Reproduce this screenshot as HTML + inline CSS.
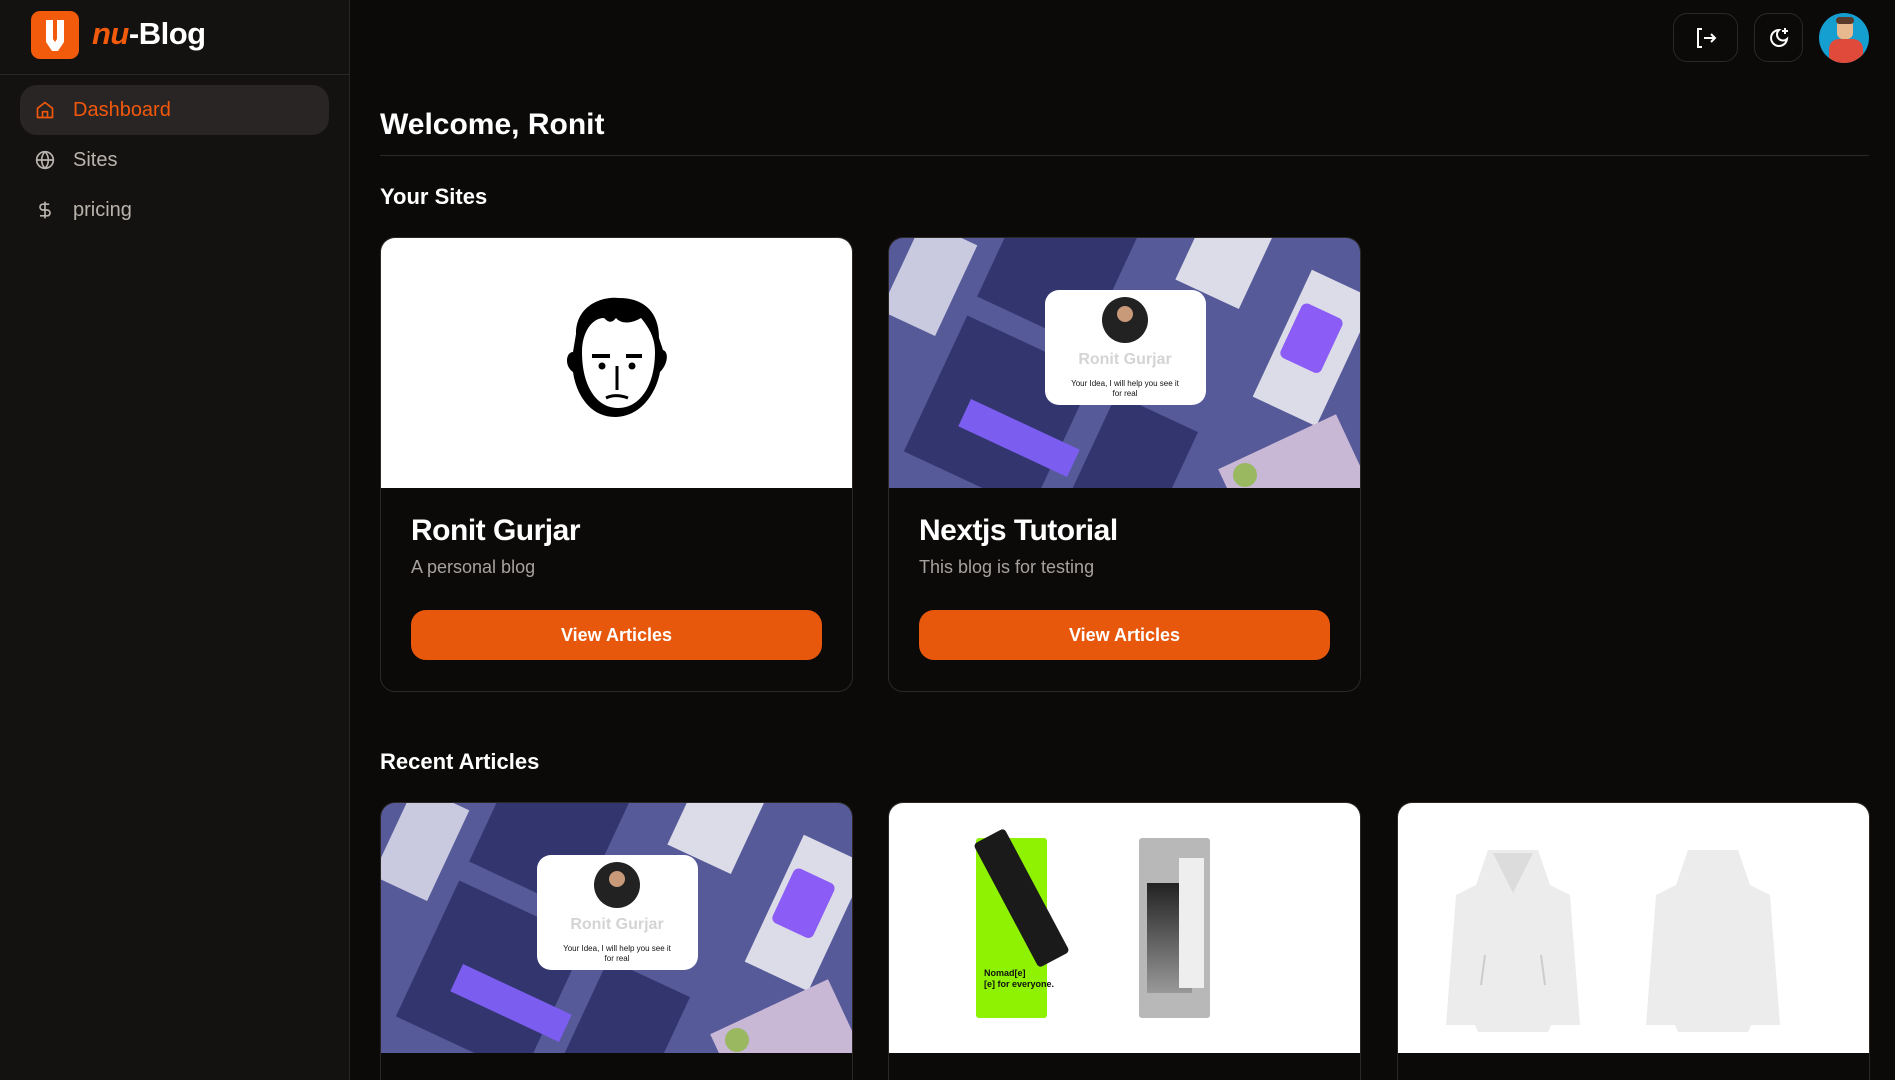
<!DOCTYPE html>
<html style="overflow:hidden;width:1895px;height:1080px"><head><meta charset="utf-8"><style>
*{margin:0;padding:0;box-sizing:border-box}
body{width:1895px;height:1080px;overflow:hidden;background:#0b0a09;font-family:"Liberation Sans",sans-serif;color:#fff;position:relative}
.side{position:absolute;left:0;top:0;width:350px;height:1080px;background:#141211;border-right:1px solid #262321}
.logo{position:absolute;left:31px;top:11px;width:48px;height:48px;background:#f25a0c;border-radius:9px}
.brand{position:absolute;left:92px;top:16px;font-size:31px;font-weight:bold;letter-spacing:-0.5px}
.brand i{color:#f25a0c}
.sep{position:absolute;left:0;top:74px;width:350px;height:1px;background:#2a2725}
.nav{position:absolute;left:20px;width:309px;height:50px;border-radius:17px;font-size:20px;display:flex;align-items:center;padding-left:15px;color:#b9b3ad}
.nav svg{margin-right:18px}
.act{background:#292524;color:#f2580c}
.btn{position:absolute;top:13px;height:49px;border:1px solid #2b2826;border-radius:14px;display:flex;align-items:center;justify-content:center}
h1{position:absolute;left:380px;top:108px;font-size:30px;font-weight:bold}
.hr{position:absolute;left:380px;top:155px;width:1489px;height:1px;background:#2b2826}
h2{position:absolute;left:380px;font-size:22px;font-weight:bold}
.card{position:absolute;width:473px;border:1px solid #2b2826;border-radius:15px;overflow:hidden;background:#0b0a09}
.img{height:250px;position:relative;overflow:hidden}
.ct{position:absolute;left:30px;top:276px;font-size:30px;font-weight:bold;letter-spacing:-0.5px}
.cs{position:absolute;left:30px;top:319px;font-size:18px;color:#a8a29e}
.vb{position:absolute;left:30px;top:372px;width:411px;height:50px;background:#e8580c;border-radius:15px;font-size:18px;font-weight:bold;display:flex;align-items:center;justify-content:center}
.hd{position:absolute;top:42px;width:140px;height:190px}
</style></head><body>
<div class="side">
<div class="logo"><svg width="48" height="48" viewBox="0 0 48 48"><path d="M15 9h7v19l2 3 2-3V9h7v22l-6 9h-6l-6-9z" fill="#fff"/></svg></div>
<div class="brand"><i>nu</i>-Blog</div>
<div class="sep"></div>
<div class="nav act" style="top:85px"><svg width="20" height="20" viewBox="0 0 24 24" fill="none" stroke="#f2580c" stroke-width="2" stroke-linejoin="round"><path d="M3 10l9-7 9 7v11H3z"/><path d="M9 21v-7h6v7"/></svg>Dashboard</div>
<div class="nav" style="top:135px"><svg width="20" height="20" viewBox="0 0 24 24" fill="none" stroke="#b9b3ad" stroke-width="2"><circle cx="12" cy="12" r="10"/><path d="M2 12h20M12 2c3 3 4 7 4 10s-1 7-4 10c-3-3-4-7-4-10s1-7 4-10"/></svg>Sites</div>
<div class="nav" style="top:185px"><svg width="20" height="20" viewBox="0 0 24 24" fill="none" stroke="#b9b3ad" stroke-width="2"><path d="M12 2v20M17 5H9.5a3.5 3.5 0 000 7h5a3.5 3.5 0 010 7H6"/></svg>pricing</div>
</div>
<div class="btn" style="left:1673px;width:65px"><svg width="24" height="24" viewBox="0 0 24 24" fill="none" stroke="#fff" stroke-width="2"><path d="M8 3H4v18h4M10 12h11M17 8l4 4-4 4"/></svg></div>
<div class="btn" style="left:1754px;width:49px"><svg width="24" height="24" viewBox="0 0 24 24" fill="none" stroke="#fff" stroke-width="2"><path d="M12 4a8 8 0 108 9 6 6 0 01-8-9z"/><path d="M18 2v6M15 5h6"/></svg></div>
<div style="position:absolute;left:1819px;top:13px;width:50px;height:50px;border-radius:50%;background:#159ed0;overflow:hidden"><div style="position:absolute;left:18px;top:6px;width:16px;height:20px;background:#e8b98f;border-radius:6px"></div><div style="position:absolute;left:17px;top:4px;width:18px;height:7px;background:#5a3a2a;border-radius:4px"></div><div style="position:absolute;left:10px;top:26px;width:34px;height:30px;background:#e04a3a;border-radius:10px"></div></div>
<h1>Welcome, Ronit</h1>
<div class="hr"></div>
<h2 style="top:184px">Your Sites</h2>
<div class="card" style="left:380px;top:237px;height:455px">
<div class="img" style="background:#fff"><svg style="position:absolute;left:183px;top:56px" width="107" height="135" viewBox="0 0 107 135"><path d="M12 40C12 10 40 2 55 4c25 0 40 14 40 40l4 12c6 2 5 14 -3 22-4 22-20 45-45 45S12 100 9 78C0 72 2 58 9 58z" fill="#000"/><path d="M18 58c0-20 10-34 22-34 5 5 8 5 12 0 5 6 15 6 25 0 10 12 14 22 14 34 0 35-16 56-37 56S18 93 18 58z" fill="#fff"/><path d="M28 62h18M62 62h16" stroke="#000" stroke-width="4"/><circle cx="38" cy="72" r="3.5"/><circle cx="68" cy="72" r="3.5"/><path d="M53 72v24M42 104c6-3 14-3 22 0" stroke="#000" stroke-width="3" fill="none"/></svg></div>
<div class="ct">Ronit Gurjar</div><div class="cs">A personal blog</div><div class="vb">View Articles</div></div>
<div class="card" style="left:888px;top:237px;height:455px">
<div class="img" id="p1"></div>
<div class="ct">Nextjs Tutorial</div><div class="cs">This blog is for testing</div><div class="vb">View Articles</div></div>
<h2 style="top:749px">Recent Articles</h2>
<div class="card" style="left:380px;top:802px;height:278px;border-bottom:none;border-radius:15px 15px 0 0"><div class="img" id="p2"></div></div>
<div class="card" style="left:888px;top:802px;height:278px;border-bottom:none;border-radius:15px 15px 0 0"><div class="img" style="background:#fff">
<div style="position:absolute;left:87px;top:35px;width:71px;height:180px;background:#8ef202;border-radius:3px"></div>
<div style="position:absolute;left:115px;top:25px;width:35px;height:140px;background:#1a1a1a;transform:rotate(-28deg);border-radius:4px"></div>
<div style="position:absolute;left:95px;top:165px;font-size:9px;color:#111;font-weight:bold;line-height:11px">Nomad[e]<br>[e] for everyone.</div>
<div style="position:absolute;left:250px;top:35px;width:71px;height:180px;background:#b8b8b8;border-radius:3px"></div>
<div style="position:absolute;left:258px;top:80px;width:45px;height:110px;background:linear-gradient(#222,#999);"></div>
<div style="position:absolute;left:290px;top:55px;width:25px;height:130px;background:#eee;"></div>
</div></div>
<div class="card" style="left:1397px;top:802px;height:278px;border-bottom:none;border-radius:15px 15px 0 0"><div class="img" style="background:#fff">
<svg class="hd" style="left:45px" viewBox="0 0 140 190"><path d="M45 5h50l12 35 20 10 10 130H108l-3 7H35l-3-7H3L13 50l20-10z" fill="#ececec"/><path d="M50 8l20 40 20-40" fill="#dcdcdc"/><path d="M42 110l-4 30M98 110l4 30" stroke="#ccc" stroke-width="2"/></svg>
<svg class="hd" style="left:245px" viewBox="0 0 140 190"><path d="M45 5h50l12 35 20 10 10 130H108l-3 7H35l-3-7H3L13 50l20-10z" fill="#ececec"/></svg>
</div></div>
<script>
var s='<svg width="473" height="250" viewBox="0 0 473 250" style="position:absolute;left:0;top:0"><rect width="473" height="250" fill="#565a99"/><g fill="#33366e"><rect x="110" y="-40" width="120" height="130" transform="rotate(25 170 25)"/><rect x="40" y="100" width="140" height="150" transform="rotate(25 110 175)"/><rect x="200" y="170" width="90" height="110" transform="rotate(25 245 225)"/></g><g fill="#c9cadf"><rect x="10" y="-10" width="60" height="100" transform="rotate(25 40 40)"/><rect x="300" y="-20" width="70" height="80" transform="rotate(25 335 20)" fill="#dcdce8"/><rect x="390" y="40" width="70" height="140" transform="rotate(25 425 110)" fill="#dcdce8"/></g><rect x="400" y="70" width="45" height="60" rx="6" fill="#8b5cf6" transform="rotate(25 422 100)"/><rect x="340" y="200" width="130" height="80" fill="#c8b8d6" transform="rotate(-25 405 240)"/><circle cx="356" cy="237" r="12" fill="#9ab860"/><rect x="70" y="185" width="120" height="30" fill="#7b5df0" transform="rotate(25 130 200)"/><rect x="156" y="52" width="161" height="115" rx="14" fill="#fff"/><circle cx="236" cy="82" r="23" fill="#222"/><circle cx="236" cy="76" r="8" fill="#c89a7a"/><text x="236" y="126" fill="#d4d4d4" font-size="16" font-weight="bold" text-anchor="middle" font-family="Liberation Sans">Ronit Gurjar</text><text x="236" y="148" fill="#111" font-size="8" text-anchor="middle" font-family="Liberation Sans">Your Idea, I will help you see it</text><text x="236" y="158" fill="#111" font-size="8" text-anchor="middle" font-family="Liberation Sans">for real</text></svg>';
document.getElementById('p1').innerHTML=s;document.getElementById('p2').innerHTML=s;
</script>
</body></html>
